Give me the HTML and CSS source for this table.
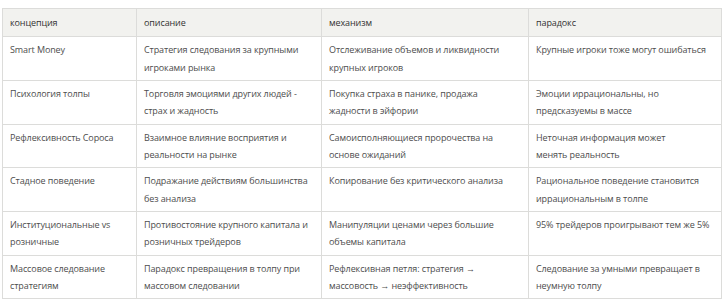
FILE: index.html
```html
<!DOCTYPE html>
<html lang="ru">
<head>
<meta charset="utf-8">
<link rel="stylesheet" href="styles.css">
</head>
<body>
<table class="grid">
  <colgroup>
    <col class="c1"><col class="c2"><col class="c3"><col class="c4">
  </colgroup>
  <thead>
    <tr><th>концепция</th><th>описание</th><th>механизм</th><th>парадокс</th></tr>
  </thead>
  <tbody>
    <tr><td>Smart Money</td><td>Стратегия следования за крупными<br>игроками рынка</td><td>Отслеживание объемов и ликвидности<br>крупных игроков</td><td>Крупные игроки тоже могут ошибаться</td></tr>
    <tr><td>Психология толпы</td><td>Торговля эмоциями других людей -<br>страх и жадность</td><td>Покупка страха в панике, продажа<br>жадности в эйфории</td><td>Эмоции иррациональны, но<br>предсказуемы в массе</td></tr>
    <tr><td>Рефлексивность Сороса</td><td>Взаимное влияние восприятия и<br>реальности на рынке</td><td>Самоисполняющиеся пророчества на<br>основе ожиданий</td><td>Неточная информация может<br>менять реальность</td></tr>
    <tr><td>Стадное поведение</td><td>Подражание действиям большинства<br>без анализа</td><td>Копирование без критического анализа</td><td>Рациональное поведение становится<br>иррациональным в толпе</td></tr>
    <tr><td>Институциональные vs<br>розничные</td><td>Противостояние крупного капитала и<br>розничных трейдеров</td><td>Манипуляции ценами через большие<br>объемы капитала</td><td>95% трейдеров проигрывают тем же 5%</td></tr>
    <tr><td>Массовое следование<br>стратегиям</td><td>Парадокс превращения в толпу при<br>массовом следовании</td><td>Рефлексивная петля: стратегия →<br>массовость → неэффективность</td><td>Следование за умными превращает в<br>неумную толпу</td></tr>
  </tbody>
</table>
</body>
</html>
```

FILE: styles.css
```css
html, body {
  margin: 0;
  background: #ffffff;
}
body {
  padding: 8px 0 0 2px;
  font-family: "Open Sans", "Noto Sans", sans-serif;
  font-size: 9px;
  letter-spacing: -0.1px;
  color: #4d4d4d;
}
.grid {
  border-collapse: collapse;
  table-layout: fixed;
  width: 720px;
}
.c1 { width: 134px; }
.c2 { width: 185px; }
.c3 { width: 207px; }
.c4 { width: 193px; }
.grid th, .grid td {
  border: 1px solid #dcdcda;
  text-align: left;
  vertical-align: top;
  padding: 4px 7px 4px 7px;
  line-height: 17.33px;
  font-weight: normal;
  white-space: nowrap;
  overflow: hidden;
}
.grid th {
  background: #f2f2ef;
  color: #333333;
  padding-top: 5px;
  padding-bottom: 5px;
}
```
